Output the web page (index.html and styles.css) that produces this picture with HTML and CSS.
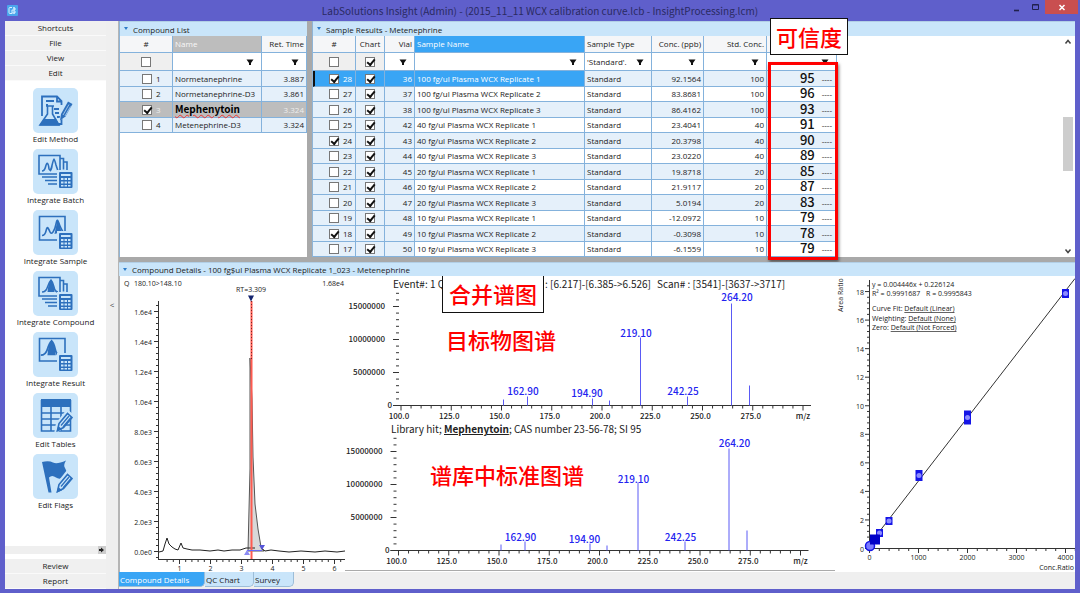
FILE: index.html
```html
<!DOCTYPE html>
<html lang="en">
<head>
<meta charset="utf-8">
<meta name="viewport" content="width=device-width, initial-scale=1">
<title>LabSolutions Insight</title>
<link rel="stylesheet" href="styles.css">
</head>
<body>
<svg class="defs" aria-hidden="true">
  <defs>
    <g id="calc">
      <rect x="24" y="21" width="17" height="20" fill="#c9e5fa"/>
      <rect x="26" y="23" width="13.500" height="16" rx="1" fill="#2d70bd"/>
      <path d="M28 25h9.500v2h-9.500z" fill="#c9e5fa"/>
      <path d="M28 29h2.500v2h-2.500zM31.500 29h2.500v2h-2.500zM35 29h2.500v2h-2.500zM28 32.500h2.500v2h-2.500zM31.500 32.500h2.500v2h-2.500zM35 32.500h2.500v2h-2.500zM28 36h2.500v1.500h-2.500zM31.500 36h2.500v1.500h-2.500zM35 36h2.500v1.500h-2.500z" fill="#c9e5fa"/>
    </g>
    <g id="stack" fill="none" stroke="#2d70bd" stroke-width="1.600">
      <path d="M27 9.500h3.500v11M30.500 13h3.500v8M9 28h16M12 31.500h13M15 35h10"/>
    </g>
    <g id="pencil">
      <path d="M21 41l2-11 11-14 7 6-11 14z" fill="#c9e5fa"/>
      <path d="M24.500 37.500l1.500-7 8.500-10 4.500 4-8.500 10z" fill="#c9e5fa" stroke="#2d70bd" stroke-width="1.600"/>
      <path d="M28 32.500l8-9.500M30 34l8-9.500M24.500 37.500l1-3.500 2.500 2z" stroke="#2d70bd" stroke-width="1.300" fill="#2d70bd"/>
    </g>
    <g id="peaks"><path d="M9 22q2.500 0 3.500-4t2-3.500 1.500 5.500q1.500 3 3-3.500t2-6.500 2 6l2 6M17 22q1.500-1 2-5" fill="none" stroke="#2d70bd" stroke-width="1.600"/></g>
    <g id="onepeak"><path d="M9 21q4 0 5.500-5t3.500-7q2 2 3 7t4 5" fill="none" stroke="#2d70bd" stroke-width="1.500"/><path d="M14.500 21q1-10 3.500-12 2.500 2 3.500 12z" fill="#2d70bd"/></g>
    <g id="twopeaks"><path d="M9 25.500q3 0 4-4.500t2-3 2 4 3 0 3-8 2-3 2 5 3 6" fill="none" stroke="#2d70bd" stroke-width="1.600"/><path d="M21.500 24l2.500-12h2l2.500 10z" fill="#2d70bd"/></g>
  </defs>
</svg>

<header class="titlebar">
  <svg class="app-icon" viewBox="0 0 11 11" aria-hidden="true"><rect width="11" height="11" rx="1" fill="#4ba6ec"/><path d="M5 2.500H3a1 1 0 0 0-1 1v4a1 1 0 0 0 1 1h2M6 3h2v2H5v3h3V6M7 2v7" fill="none" stroke="#d9f1ff"/></svg>
  <h1>LabSolutions Insight (Admin) - (2015_11_11 WCX calibration curve.lcb - InsightProcessing.lcm)</h1>
  <div class="window-buttons">
    <button type="button" aria-label="Minimize"><svg viewBox="0 0 10 10"><path d="M2 8.500h5" stroke="#20204c" stroke-width="1.600"/></svg></button>
    <button type="button" aria-label="Maximize"><svg viewBox="0 0 10 10"><path d="M1.500 2.500h6v5h-6zM1.500 3h6" fill="none" stroke="#20204c"/></svg></button>
    <button type="button" class="close" aria-label="Close"><svg viewBox="0 0 10 10"><path d="M2.500 3l5 5m0-5l-5 5" stroke="#fff" stroke-width="1.500"/></svg></button>
  </div>
</header>

<div class="window">
  <nav class="sidebar" aria-label="Shortcuts">
    <button type="button" class="group">Shortcuts</button>
    <button type="button" class="group">File</button>
    <button type="button" class="group">View</button>
    <button type="button" class="group">Edit</button>
    <div class="tools">
      <button type="button" class="tool"><svg viewBox="0 0 45 45"><path d="M9 28V8.500h15l4.500 4.500v4M28.500 31v5H25M24 8.500v5h4.500M13 13h8M13 17h2M21 21h5M22 25h4M24 29h3" fill="none" stroke="#2d70bd" stroke-width="1.800"/><path d="M13 18h8M14.500 18v8L7 37h19l-6.500-11v-8" fill="#c9e5fa" stroke="#2d70bd" stroke-width="1.600"/><path d="M11 31h12l3.500 6.500h-20z" fill="#2d70bd"/><path d="M26 33l1.500-7 8-14 5 2.500-8 14z" fill="#c9e5fa"/><path d="M27 32.500l1-6.500 7-12.500 4.500 2.500-7 12.500z" fill="#2d70bd"/><path d="M30 27l6-10.500M32 28l5.500-9.500" stroke="#c9e5fa" stroke-width=".7"/></svg><span>Edit Method</span></button>
      <button type="button" class="tool"><svg viewBox="0 0 45 45"><path d="M6 6.500h21V25H6z" fill="none" stroke="#2d70bd" stroke-width="1.600"/><use href="#peaks"/><use href="#stack"/><use href="#calc"/></svg><span>Integrate Batch</span></button>
      <button type="button" class="tool"><svg viewBox="0 0 45 45"><path d="M6.500 6.500H32V30H6.500z" fill="none" stroke="#2d70bd" stroke-width="1.600"/><use href="#twopeaks"/><use href="#calc"/></svg><span>Integrate Sample</span></button>
      <button type="button" class="tool"><svg viewBox="0 0 45 45"><path d="M6 6.500h21V25H6z" fill="none" stroke="#2d70bd" stroke-width="1.600"/><use href="#onepeak"/><use href="#stack"/><use href="#calc"/></svg><span>Integrate Compound</span></button>
      <button type="button" class="tool"><svg viewBox="0 0 45 45"><path d="M6.500 6.500H32V29H6.500z" fill="none" stroke="#2d70bd" stroke-width="1.600"/><g transform="translate(-3 -2) scale(1.200)"><use href="#onepeak"/></g><use href="#calc"/></svg><span>Integrate Result</span></button>
      <button type="button" class="tool"><svg viewBox="0 0 45 45"><path d="M8 6h30v8H8z" fill="#2d70bd"/><path d="M8.500 7v31h29V7M8 20h29M8 26h29M8 32h29M18 14v24M28 14v24" fill="none" stroke="#2d70bd" stroke-width="1.600"/><use href="#pencil"/></svg><span>Edit Tables</span></button>
      <button type="button" class="tool"><svg viewBox="0 0 45 45"><path d="M9 8q7-1.500 11 .5t13-2q-3 5-1 7.500t2 7.500q-7 5-11 2t-7 0l2.500 15h-3z" fill="#2d70bd"/><use href="#pencil"/></svg><span>Edit Flags</span></button>
    </div>
    <div class="side-scroll"><button type="button" aria-label="More shortcuts"><svg viewBox="0 0 8 8"><path d="M1 3h2V1.500L6 4 3 6.500V5H1z" fill="#222"/></svg></button></div>
    <button type="button" class="group">Review</button>
    <button type="button" class="group">Report</button>
  </nav>
  <button type="button" class="collapse" aria-label="Collapse sidebar">&lt;</button>

  <main class="workspace">
    <div class="upper">
      <section class="pane">
        <h2 class="pane-title">Compound List</h2>
        <table class="grid compounds">
          <colgroup><col class="c-pick"><col class="c-name"><col class="c-rt"></colgroup>
          <thead>
            <tr><th class="mid">#</th><th class="sorted">Name</th><th class="num">Ret. Time</th></tr>
            <tr class="filter"><td class="mid dim"><input type="checkbox" aria-label="Select all compounds"></td><td data-filter="Name"></td><td data-filter="Ret. Time"></td></tr>
          </thead>
          <tbody id="compound-rows"></tbody>
        </table>
      </section>
      <section class="pane results">
        <h2 class="pane-title">Sample Results - Metenephrine</h2>
        <div class="results-body">
          <div class="grid-wrap">
            <table class="grid samples">
              <colgroup><col class="s-pick"><col class="s-chart"><col class="s-vial"><col class="s-name"><col class="s-type"><col class="s-conc"><col class="s-std"><col class="s-conf"></colgroup>
              <thead>
                <tr><th class="mid">#</th><th class="mid">Chart</th><th class="num">Vial</th><th class="active">Sample Name</th><th>Sample Type</th><th class="num">Conc. (ppb)</th><th class="num">Std. Conc.</th><th></th></tr>
                <tr class="filter"><td class="mid dim"><input type="checkbox" aria-label="Select all samples"></td><td class="mid dim"><input type="checkbox" checked aria-label="Chart all samples"></td><td data-filter="Vial" class="center"></td><td data-filter="Sample Name"></td><td data-filter="Sample Type" data-text="'Standard'."></td><td data-filter="Conc."></td><td data-filter="Std. Conc."></td><td data-filter="Confidence"></td></tr>
              </thead>
              <tbody id="sample-rows"></tbody>
            </table>
            <div class="confidence-frame"></div>
            <strong class="confidence-label">可信度</strong>
          </div>
          <div class="vscroll">
            <svg viewBox="0 0 10 10"><path d="M2.500 6.500l2.500-3 2.500 3" fill="none" stroke="#444" stroke-width="1.500"/></svg>
            <div class="thumb"></div>
            <svg viewBox="0 0 10 10"><path d="M2.500 3.500l2.500 3 2.500-3" fill="none" stroke="#444" stroke-width="1.500"/></svg>
          </div>
        </div>
      </section>
    </div>

    <section class="details">
      <h2 class="pane-title">Compound Details - 100 fg$ul Plasma WCX Replicate 1_023 - Metenephrine</h2>
      <div class="charts">
        <svg id="chromatogram" viewBox="119 277 226 296" role="img" aria-label="Chromatogram"></svg>
        <svg id="spectra" viewBox="345 277 490 296" role="img" aria-label="Mass spectra"></svg>
        <svg id="calibration" viewBox="835 277 240 296" role="img" aria-label="Calibration curve"></svg>
      </div>
      <div class="tabs" role="tablist">
        <button type="button" role="tab" aria-selected="true" class="tab-details">Compound Details</button>
        <button type="button" role="tab" aria-selected="false" class="tab-qc">QC Chart</button>
        <button type="button" role="tab" aria-selected="false" class="tab-survey">Survey</button>
      </div>
    </section>
  </main>
</div>
<script src="app.js"></script>
</body>
</html>
```
FILE: styles.css
```css
* { box-sizing: border-box; }

body {
  margin: 0;
  min-height: 100vh;
  display: flex;
  flex-direction: column;
  background: #5f5fcb;
  color: #222;
  font: 8px/14px "Open Sans", "Noto Sans CJK SC", sans-serif;
}

button {
  margin: 0;
  padding: 0;
  border: 0;
  background: none;
  color: inherit;
  font: inherit;
}

h1, h2 { margin: 0; font-weight: 400; }
svg { display: block; }
.defs { position: absolute; width: 0; height: 0; }

/* Title bar */
.titlebar {
  height: 21px;
  display: grid;
  grid-template-columns: 93px 1fr 93px;
  align-items: center;
}
.app-icon { width: 11px; height: 11px; margin-left: 7px; }
.titlebar h1 {
  text-align: center;
  font-family: "Noto Sans CJK SC", sans-serif;
  font-size: 10px;
  color: #2a2a62;
  white-space: nowrap;
}
.window-buttons { display: flex; justify-content: flex-end; align-self: start; padding-right: 2px; }
.window-buttons button { width: 19px; height: 14px; display: grid; place-items: center; }
.window-buttons svg { width: 10px; height: 10px; }
.window-buttons .close { width: 33px; background: #c94f50; }

/* Frame */
.window {
  flex: 1;
  display: grid;
  grid-template-columns: 101px 13px minmax(0, 1fr);
  margin: 0 5px 4px;
  background: #efefef;
}

.sidebar { display: flex; flex-direction: column; background: #fff; }
.group { height: 15px; line-height: 14px; background: #f0f0f0; border-bottom: 1px solid #fafafa; }
.tools { flex: 1; display: flex; flex-direction: column; align-items: center; padding-top: 7px; }
.tool { display: flex; flex-direction: column; align-items: center; height: 61px; white-space: nowrap; }
.tool svg { width: 45px; height: 45px; flex: none; border-radius: 5px; background: #c9e5fa; }
.tool span { line-height: 12px; }
.side-scroll { height: 8px; margin-bottom: 5px; background: #efefef; display: flex; justify-content: flex-end; }
.side-scroll button { width: 8px; background: #ccc; }
.collapse { text-align: center; color: #444; border-right: 1px solid #b5b5b5; }

.workspace { display: flex; flex-direction: column; background: #fff; }
.upper {
  display: grid;
  grid-template-columns: 188px minmax(0, 1fr);
  gap: 5px;
  background: #a9a9a9;
  border-bottom: 5px solid #a9a9a9;
}
.pane { background: #fff; border-left: 1px solid #8fb4d6; min-width: 0; }
.pane-title {
  position: relative;
  height: 15px;
  padding-left: 13px;
  font-size: 8px;
  line-height: 16px;
  background: #c9e5fa;
  border-top: 1px solid #b2cfe6;
  white-space: nowrap;
}
.pane-title::before {
  content: "";
  position: absolute;
  left: 4px;
  top: 5px;
  border: 2px solid transparent;
  border-top: 3px solid #2e7cc9;
}

/* Grids */
.grid { table-layout: fixed; border-collapse: separate; border-spacing: 0; white-space: nowrap; }
.grid th, .grid td {
  height: 15px;
  padding: 0 2px;
  text-align: left;
  font-weight: 400;
  line-height: 12px;
  border-right: 1px solid #84b2dc;
  border-bottom: 1px solid #84b2dc;
}
.grid th { height: 17px; background: #f5f6f8; }
.grid .filter td { height: 18px; background: #fff; }
.grid tbody tr:nth-child(odd) td { height: 16px; }
.grid .num { text-align: right; }
.grid .mid { text-align: center; }
.grid .mid input { display: block; margin: 0 auto; }
.grid .filter .dim { background: #efefef; }
.grid th.sorted { background: #bdbdbd; color: #f8f8f8; }
.grid th.active { background: #39a5f5; color: #fff; }
.filter-line { display: flex; align-items: center; justify-content: space-between; padding-right: 5px; }
.filter-line button { width: 8px; height: 8px; margin-left: auto; }

.compounds { width: 187px; }
.c-pick { width: 53px; }
.c-name { width: 89px; }
.c-rt { width: 45px; }
.compounds tbody td { background: #e5f0fa; }
.compounds tbody td:first-child { padding-left: 22px; }
.compounds tbody .picked td { background: #bdbdbd; color: #eee; }
.compounds .picked mark {
  background: none;
  color: #000;
  font-family: "Noto Sans CJK SC", sans-serif;
  font-size: 10px;
  font-weight: 700;
  text-decoration: underline wavy #e33 1px;
}

.samples { width: 524px; }
.s-pick { width: 43px; }
.s-chart { width: 29px; }
.s-vial { width: 30px; }
.s-name { width: 170px; }
.s-type { width: 67px; }
.s-conc { width: 52px; }
.s-std { width: 63px; }
.s-conf { width: 70px; }
.samples tbody td:first-child { padding-left: 16px; }
.samples tbody tr:nth-child(odd) td,
.samples tbody td:nth-child(-n+3) { background: #e5f0fa; }
.samples tbody tr:nth-child(even) td:nth-child(n+4) { background: #fff; }
.samples tbody tr.current td:nth-child(-n+4) { background: #39a5f5; color: #fff; }
.samples tbody tr.current td:first-child { border-left: 2px solid #111; padding-left: 14px; }
.samples tbody td.conf { padding-right: 4px; text-align: right; }
.conf b {
  display: inline-block;
  height: 12px;
  margin-right: 7px;
  color: #111;
  font-family: "Noto Sans CJK SC", sans-serif;
  font-size: 13px;
  font-weight: 500;
  line-height: 9px;
  vertical-align: top;
}

.pick { display: flex; align-items: center; gap: 4px; }
input[type="checkbox"] {
  appearance: none;
  flex: none;
  width: 10px;
  height: 10px;
  margin: 0;
  border: 1px solid #777;
  background: #fff;
}
input[type="checkbox"]:checked::before {
  content: "";
  display: block;
  width: 6px;
  height: 3px;
  margin: 1px;
  border-left: 2px solid #111;
  border-bottom: 2px solid #111;
  transform: rotate(-50deg);
}

.results-body { display: flex; justify-content: space-between; }
.grid-wrap { position: relative; }
.confidence-frame {
  position: absolute;
  left: 455px;
  top: 26px;
  width: 70px;
  height: 198px;
  border: 3px solid #f00;
  box-shadow: 1px 2px 3px rgba(0, 0, 0, .5);
}
.confidence-label {
  position: absolute;
  left: 457px;
  top: -18px;
  padding: 0 5px;
  border: 1px solid #111;
  background: #fff;
  color: #f00;
  font-family: "Noto Sans CJK SC", sans-serif;
  font-size: 22px;
  font-weight: 500;
  line-height: 35px;
  white-space: nowrap;
}
.vscroll { display: flex; flex-direction: column; width: 12px; padding: 1px 2px 1px 0; }
.vscroll svg { width: 10px; height: 10px; }
.vscroll .thumb { height: 54px; margin: 70px 0 auto; background: #cdcdcd; }

/* Details */
.details { flex: 1; display: flex; flex-direction: column; }
.details .pane-title { height: 14px; line-height: 14px; }
.charts { display: grid; grid-template-columns: 226fr 490fr 240fr; }
.charts svg { width: 100%; height: auto; }
.charts #spectra { overflow: visible; }
.charts text { font-family: "Noto Sans CJK SC", sans-serif; font-size: 7px; fill: #222; }
.charts .small { font-family: "Open Sans", sans-serif; }
.charts .label { font-size: 8px; font-weight: 500; }
.charts .caption { font-size: 10px; }
.charts .peak { font-size: 10px; font-weight: 500; fill: #2222f0; }
.charts .note { font-size: 22px; font-weight: 500; fill: #f00; }
.charts .mis { font-weight: 700; text-decoration: underline wavy #e33 1px; }
.charts .link { text-decoration: underline; }

.tabs { flex: 1; display: flex; align-items: flex-start; background: #efefef; }
.tabs button {
  height: 15px;
  padding-left: 1px;
  text-align: left;
  line-height: 13px;
  background: #c9e5fa;
  border-right: 1px solid #9cbdd8;
  border-bottom: 1px solid #9cbdd8;
  border-radius: 0 0 5px 0;
}
.tabs .tab-details { width: 86px; background: #39a5f5; color: #fff; }
.tabs .tab-qc { width: 49px; }
.tabs .tab-survey { width: 40px; }
```
FILE: app.js
```js
const compounds = [
  [1, "Normetanephrine", "3.887", false],
  [2, "Normetanephrine-D3", "3.861", false],
  [3, "Mephenytoin", "3.324", true],
  [4, "Metenephrine-D3", "3.324", false],
];

const samples = [
  [28, 1, 36, "100 fg/ul Plasma WCX Replicate 1", "92.1564", 100, 95],
  [27, 0, 37, "100 fg/ul Plasma WCX Replicate 2", "83.8681", 100, 96],
  [26, 0, 38, "100 fg/ul Plasma WCX Replicate 3", "86.4162", 100, 93],
  [25, 0, 42, "40 fg/ul Plasma WCX Replicate 1", "23.4041", 40, 91],
  [24, 1, 43, "40 fg/ul Plasma WCX Replicate 2", "20.3798", 40, 90],
  [23, 0, 44, "40 fg/ul Plasma WCX Replicate 3", "23.0220", 40, 89],
  [22, 0, 45, "20 fg/ul Plasma WCX Replicate 1", "19.8718", 20, 85],
  [21, 0, 46, "20 fg/ul Plasma WCX Replicate 2", "21.9117", 20, 87],
  [20, 0, 47, "20 fg/ul Plasma WCX Replicate 3", "5.0194", 20, 83],
  [19, 0, 48, "10 fg/ul Plasma WCX Replicate 1", "-12.0972", 10, 79],
  [18, 1, 49, "10 fg/ul Plasma WCX Replicate 2", "-0.3098", 10, 78],
  [17, 0, 50, "10 fg/ul Plasma WCX Replicate 3", "-6.1559", 10, 79],
];

const box = (on, label = "") =>
  `<input type="checkbox"${on ? " checked" : ""}${label ? ` aria-label="${label}"` : ""}>`;

document.getElementById("compound-rows").innerHTML = compounds.map(([n, name, rt, on]) =>
  `<tr class="${on ? "picked" : ""}"><td><label class="pick">${box(on)}${n}</label></td>` +
  `<td>${on ? `<mark>${name}</mark>` : name}</td><td class="num">${rt}</td></tr>`).join("");

document.getElementById("sample-rows").innerHTML = samples.map(([n, on, vial, name, conc, std, conf], i) =>
  `<tr class="${i === 0 ? "current" : ""}"><td><label class="pick">${box(on)}${n}</label></td>` +
  `<td class="mid">${box(true, "Chart sample " + n)}</td><td class="num">${vial}</td><td>${name}</td>` +
  `<td>Standard</td><td class="num">${conc}</td><td class="num">${std}</td>` +
  `<td class="conf"><b>${conf}</b>----</td></tr>`).join("");

document.querySelectorAll("[data-filter]").forEach(cell => {
  cell.innerHTML = `<div class="filter-line">${cell.dataset.text || ""}` +
    `<button type="button" aria-label="Filter ${cell.dataset.filter}"><svg viewBox="0 0 8 8">` +
    `<path d="M0.500 1.500h7L5 5v2H3V5z" fill="#111"/></svg></button></div>`;
});

const line = (x1, y1, x2, y2, color = "#333", width = 1) =>
  `<path d="M${x1} ${y1}L${x2} ${y2}" stroke="${color}" stroke-width="${width}" fill="none"/>`;
const text = (x, y, s, cls = "small", anchor = "start", extra = "") =>
  `<text x="${x}" y="${y}" class="${cls}" text-anchor="${anchor}" ${extra}>${s}</text>`;

function drawChromatogram() {
  let s = line(119.5, 277, 119.5, 573, "#b5b5b5") + line(158.5, 302, 158.5, 561) + line(158, 560.5, 345, 560.5);
  const names = ["0.0e0", "2.0e3", "4.0e3", "6.0e3", "8.0e3", "1.0e4", "1.2e4", "1.4e4", "1.6e4"];
  for (let i = -1; i <= 41; i++) {
    const y = 552.5 - i * 6;
    s += line(i % 5 ? 156 : 154, y, 158, y);
    if (i >= 0 && i % 5 === 0) s += text(152, y + 3, names[i / 5], "small", "end");
  }
  for (let i = -2; i <= 26; i++) {
    const x = 179.5 + i * 6.2;
    s += line(x, 561, x, i % 5 ? 563 : 565);
    if (i >= 0 && i % 5 === 0) s += text(x, 572, i / 5 + 1, "small", "middle");
  }
  s += `<path d="M248 552L250 470V359L252 400L253 458L255 505L258 530L261 548L264 552z" fill="#d8d8d8" stroke="#555"/>`;
  s += `<path d="M159 553l4-1 2-7 2-6 2 6 3 3 3 2 3 1 3-7 2 5 4 1 5 1 8 0 10 1 8-1 6 1 8-1 8 0 6-2 4 0h5M261 549l4 3 6-1 8 1 10 1 12-1 14 1 10-1 12 1 8-1" fill="none" stroke="#222"/>`;
  s += line(251.5, 302, 251.5, 560, "#ff5b50", 2);
  s += `<path d="M251.500 302V360" stroke="#802020" stroke-dasharray="1 2"/>`;
  s += line(247, 551.5, 262, 551.5, "#6a6af5");
  s += `<path d="M248 296.500h6l-3 6z" fill="#14246e"/><path d="M244 556h6l-3-5z" fill="#8c8cf5"/><path d="M259 546h6l-3 5z" fill="#5555d8"/>`;
  s += text(124, 287, "Q") + text(134, 287, "180.10&gt;148.10") + text(344, 287, "1.68e4", "small", "end");
  s += text(251, 293, "RT=3.309", "small", "middle");
  document.getElementById("chromatogram").innerHTML = s;
}

function spectrum(x0, base, peaks, labels) {
  let s = line(x0 - 8, base, x0 + 410, base);
  for (let i = 0; i <= 17; i++) {
    const y = base - i * 6.6;
    s += line(i % 5 ? x0 - 5 : x0 - 8, y, x0 - 2, y);
    if (i % 5 === 0) s += text(x0 - (i ? 16 : 9), y + 2, i * 1000000, "label", "end");
  }
  for (let i = 0; i <= 40; i++) {
    const x = x0 + i * 10.05;
    s += line(x, base, x, base + (i % 5 ? 3 : 5));
    if (i % 5 === 0 && i < 40) s += text(x - 2, base + 13, (100 + i * 5).toFixed(1), "label", "middle");
  }
  s += text(x0 + 402, base + 13, "m/z", "label", "middle");
  peaks.forEach(([dx, h]) => { s += line(x0 + dx, base, x0 + dx, base - h, "#5a5af5"); });
  labels.forEach(([dx, h, t]) => { s += text(x0 + dx, base - h, t, "peak", "middle"); });
  return s;
}

function drawSpectra() {
  const peaks = [[102.5, 6], [126.5, 9], [191.5, 7], [208.5, 5], [239.5, 68], [286.5, 9], [330.5, 102], [348.5, 20]];
  const labels = [[122, 11, "162.90"], [186, 9, "194.90"], [235, 69, "219.10"], [282, 11, "242.25"], [336, 105, "264.20"]];
  let s = spectrum(401, 406.5, peaks, labels) + spectrum(398.5, 551.5, peaks, labels.map(([x, h, t]) => [x, h === 105 ? 104 : h - 1, t]));
  s += text(393, 289, "Event#: 1 Q", "caption") + text(545, 289, ": [6.217]-[6.385-&gt;6.526]", "caption") + text(657, 289, "Scan# : [3541]-[3637-&gt;3717]", "caption");
  s += text(391, 434, `Library hit; <tspan class="mis">Mephenytoin</tspan>; CAS number 23-56-78; SI 95`, "caption");
  s += `<rect x="442.500" y="276.500" width="101" height="37" fill="#fff" stroke="#111"/>`;
  s += text(493, 304, "合并谱图", "note", "middle") + text(501, 350, "目标物图谱", "note", "middle") + text(507, 485, "谱库中标准图谱", "note", "middle");
  s += line(345, 571.5, 835, 571.5, "#aaa");
  document.getElementById("spectra").innerHTML = s;
}

function drawCalibration() {
  let s = line(869.5, 281, 869.5, 550) + line(869, 549.5, 1075, 549.5);
  for (let i = 0; i <= 46; i++) {
    const y = 549.5 - i * 5.71;
    s += line(i % 5 ? 867 : 865, y, 869, y);
    if (i % 5 === 0) s += text(864, y + 3, i / 5 * 2, "small", "end");
  }
  for (let i = 0; i <= 21; i++) {
    const x = 869.5 + i * 9.8;
    s += line(x, 550, x, i % 5 ? 552 : 554);
    if (i % 5 === 0) s += text(x, 561, i * 200, "small", "middle");
  }
  s += line(869, 546, 1075, 279.5, "#333");
  const square = (x, y, w, h, c) => `<rect x="${x - w / 2}" y="${y - h / 2}" width="${w}" height="${h}" fill="${c}"/>`;
  const mark = (x, y, h) => square(x, y, 7, h, "#1414e6") + `<circle cx="${x}" cy="${y}" r="2.500" fill="#8c8cff"/>`;
  s += mark(1065.5, 294.5, 9) + mark(967.5, 418.5, 14) + mark(919, 476.5, 11) + mark(889, 522, 8) + mark(879.5, 534, 8);
  s += `<circle cx="870" cy="547" r="4.500" fill="#7a7aff" stroke="#1414e6" stroke-width="1.500"/>` + square(875, 540.5, 10, 10, "#0000c8");
  s += text(872, 288, "y = 0.004446x + 0.226124") + text(872, 297, "R² = 0.9991687") + text(926, 297, "R = 0.9995843");
  s += text(872, 312, `Curve Fit: <tspan class="link">Default (Linear)</tspan>`);
  s += text(872, 322, `Weighting: <tspan class="link">Default (None)</tspan>`);
  s += text(872, 331, `Zero: <tspan class="link">Default (Not Forced)</tspan>`);
  s += text(1074, 571, "Conc.Ratio", "small", "end");
  s += text(843, 313, "Area Ratio", "small", "start", `transform="rotate(-90 843 313)"`);
  document.getElementById("calibration").innerHTML = s;
}

drawChromatogram();
drawSpectra();
drawCalibration();
```
